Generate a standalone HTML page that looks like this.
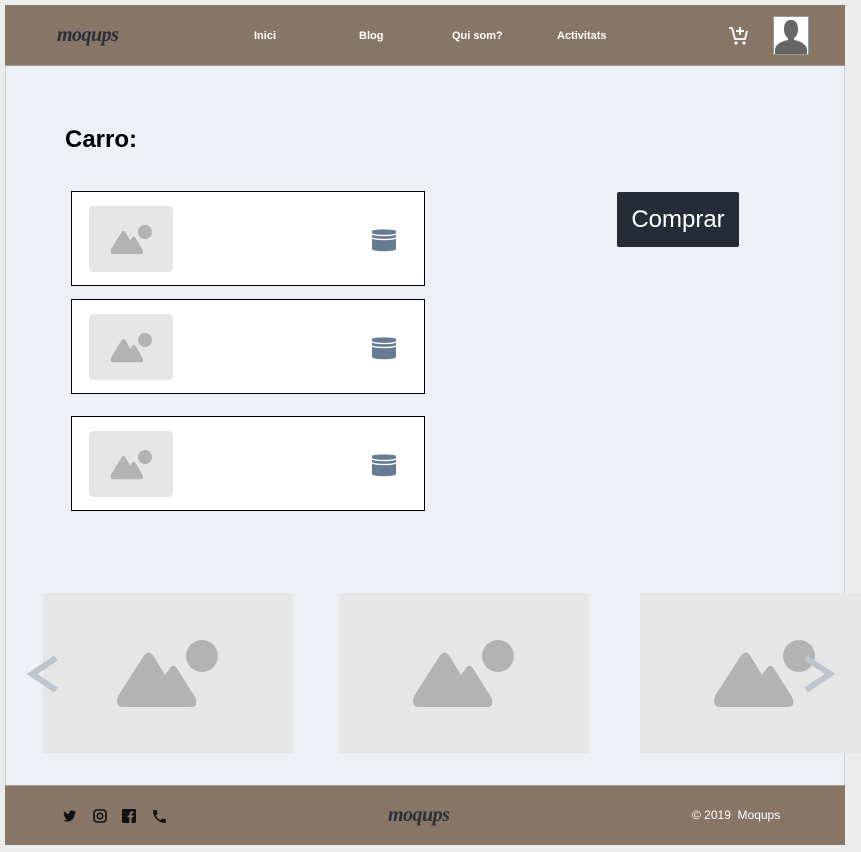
<!DOCTYPE html>
<html><head><meta charset="utf-8"><style>
*{margin:0;padding:0;box-sizing:border-box}
body{width:861px;height:852px;background:#ececec;position:relative;overflow:hidden;font-family:"Liberation Sans",sans-serif}
.frame{position:absolute;left:5px;top:5px;width:840px;height:840px;background:#edf0f5;border:1px solid #cfcfcf}
.hdr{position:absolute;left:5px;top:5px;width:840px;height:61px;background:#877665;border-bottom:1px solid #a89a8c}
.ftr{position:absolute;left:5px;top:785px;width:840px;height:60px;background:#877665;border-top:1px solid #a89a8c}
.logo{position:absolute;font-family:"Liberation Serif",serif;font-style:italic;font-weight:bold;font-size:20px;color:#2b2f3a;letter-spacing:-0.5px}
.nav{position:absolute;top:30px;color:#fff;font-size:11px;font-weight:bold}
.card{position:absolute;left:71px;width:354px;height:95px;background:#fff;border:1px solid #000}
.ph{position:absolute;left:17px;top:14px;width:84px;height:66px;background:#e6e6e6;border-radius:4px}
.big{position:absolute;top:593px;width:250px;height:160px;background:#e6e6e6}
</style></head><body>
<div class="frame"></div>
<div class="hdr"></div>
<div class="logo" style="left:57px;top:24px">moqups</div>
<div class="nav" style="left:254px">Inici</div>
<div class="nav" style="left:359px">Blog</div>
<div class="nav" style="left:452px">Qui som?</div>
<div class="nav" style="left:557px">Activitats</div>
<svg style="position:absolute;left:728px;top:25px" width="22" height="22" viewBox="0 0 22 22"><g fill="none" stroke="#fff" stroke-width="1.8"><path d="M1 3h3l3 11h10l2-8"/><path d="M12 2v8M8 6h8"/></g><circle cx="8" cy="18" r="1.6" fill="#fff"/><circle cx="16" cy="18" r="1.6" fill="#fff"/></svg>
<div style="position:absolute;left:773px;top:16px;width:36px;height:39px;background:#fff;border:1px solid #999"><svg width="34" height="37" viewBox="0 0 34 37"><rect width="34" height="37" fill="#fff"/><path d="M17 3c5 0 7 4 7 9s-2 8-4 9v2c6 1 12 4 13 9v5H1v-5c1-5 7-8 13-9v-2c-2-1-4-4-4-9s2-9 7-9z" fill="#666"/></svg></div>
<div style="position:absolute;left:65px;top:126px;font-size:24px;font-weight:bold;color:#000">Carro:</div>
<div style="position:absolute;left:617px;top:192px;width:122px;height:55px;background:#252c37;border-radius:2px;color:#fff;font-size:24px;line-height:55px;text-align:center">Comprar</div>
<svg width="0" height="0" style="position:absolute"><defs>
<path id="mp" d="M80 114Q72 114 75 103L100 64Q106 55 111 64L122 82L127 75Q131 70 135 77L152 104Q156 114 148 114Z" fill="#b3b3b3"/>
<symbol id="db" viewBox="0 0 24 24"><path d="M0 3c0-2 24-2 24 0v18c0 3-24 3-24 0z" fill="#667b93"/><path d="M0 6c4 2 20 2 24 0M0 10c4 2 20 2 24 0" stroke="#fff" stroke-width="1.3" fill="none"/></symbol>
</defs></svg>
<div class="card" style="top:191px"><div class="ph"><svg width="84" height="66"><use href="#mp" transform="translate(22,25) scale(0.41,0.43) translate(-75,-60)"/><circle cx="56" cy="26" r="7" fill="#b3b3b3"/></svg></div><svg style="position:absolute;left:300px;top:36px" width="24" height="24"><use href="#db"/></svg></div>
<div class="card" style="top:299px"><div class="ph"><svg width="84" height="66"><use href="#mp" transform="translate(22,25) scale(0.41,0.43) translate(-75,-60)"/><circle cx="56" cy="26" r="7" fill="#b3b3b3"/></svg></div><svg style="position:absolute;left:300px;top:36px" width="24" height="24"><use href="#db"/></svg></div>
<div class="card" style="top:416px"><div class="ph"><svg width="84" height="66"><use href="#mp" transform="translate(22,25) scale(0.41,0.43) translate(-75,-60)"/><circle cx="56" cy="26" r="7" fill="#b3b3b3"/></svg></div><svg style="position:absolute;left:300px;top:36px" width="24" height="24"><use href="#db"/></svg></div>
<div class="big" style="left:43px"><svg width="250" height="160"><use href="#mp"/><circle cx="159" cy="63" r="16" fill="#b3b3b3"/></svg></div>
<div class="big" style="left:339px"><svg width="250" height="160"><use href="#mp"/><circle cx="159" cy="63" r="16" fill="#b3b3b3"/></svg></div>
<div class="big" style="left:640px;width:221px"><svg width="221" height="160"><use href="#mp"/><circle cx="159" cy="63" r="16" fill="#b3b3b3"/></svg></div>
<svg style="position:absolute;left:24px;top:654px" width="38" height="40"><path d="M32 4L8 20l24 16" fill="none" stroke="#bfc5cc" stroke-width="6"/></svg>
<svg style="position:absolute;left:800px;top:654px" width="38" height="40"><path d="M6 4l24 16L6 36" fill="none" stroke="#bfc5cc" stroke-width="6"/></svg>
<div class="ftr"></div>
<svg style="position:absolute;left:63px;top:809px" width="14" height="14" viewBox="0 0 24 24"><path d="M23 5c-1 .5-2 .7-3 .8 1-.6 2-1.6 2-2.8-1 .6-2 1-3 1.2a4.6 4.6 0 00-8 4.2C7 8.2 4 6.5 2 4c-1.4 2.4-.6 5 1.4 6.2-.8 0-1.5-.2-2-.6 0 2.3 1.6 4.2 3.7 4.6-.7.2-1.4.2-2 .1.6 1.9 2.3 3.2 4.3 3.2A9.3 9.3 0 010 19.6 13 13 0 007 21.6c8.5 0 13-7 13-13v-.6c1-.7 1.7-1.5 2.3-2.4z" fill="#111"/></svg>
<svg style="position:absolute;left:93px;top:809px" width="14" height="14" viewBox="0 0 14 14"><rect x="1" y="1" width="12" height="12" rx="3" fill="none" stroke="#111" stroke-width="1.6"/><circle cx="7" cy="7" r="2.7" fill="none" stroke="#111" stroke-width="1.5"/></svg>
<svg style="position:absolute;left:122px;top:809px" width="14" height="14" viewBox="0 0 14 14"><rect width="14" height="14" rx="1.5" fill="#111"/><path d="M9.5 14V8.5h1.8l.3-2H9.5V5.3c0-.6.2-1 1-1h1.1V2.5c-.2 0-.9-.1-1.6-.1-1.6 0-2.6 1-2.6 2.7v1.4H5.6v2h1.8V14z" fill="#877665"/></svg>
<svg style="position:absolute;left:151px;top:808px" width="17" height="17" viewBox="0 0 24 24"><path d="M6.6 10.8c1.4 2.8 3.8 5.1 6.6 6.6l2.2-2.2c.3-.3.7-.4 1-.2 1.1.4 2.3.6 3.6.6.6 0 1 .4 1 1V20c0 .6-.4 1-1 1C10.6 21 3 13.4 3 4c0-.6.4-1 1-1h3.5c.6 0 1 .4 1 1 0 1.3.2 2.5.6 3.6.1.3 0 .7-.2 1z" fill="#111"/></svg>
<div class="logo" style="left:388px;top:804px">moqups</div>
<div style="position:absolute;left:692px;top:808px;color:#fff;font-size:12px">© 2019&nbsp; Moqups</div>
</body></html>
